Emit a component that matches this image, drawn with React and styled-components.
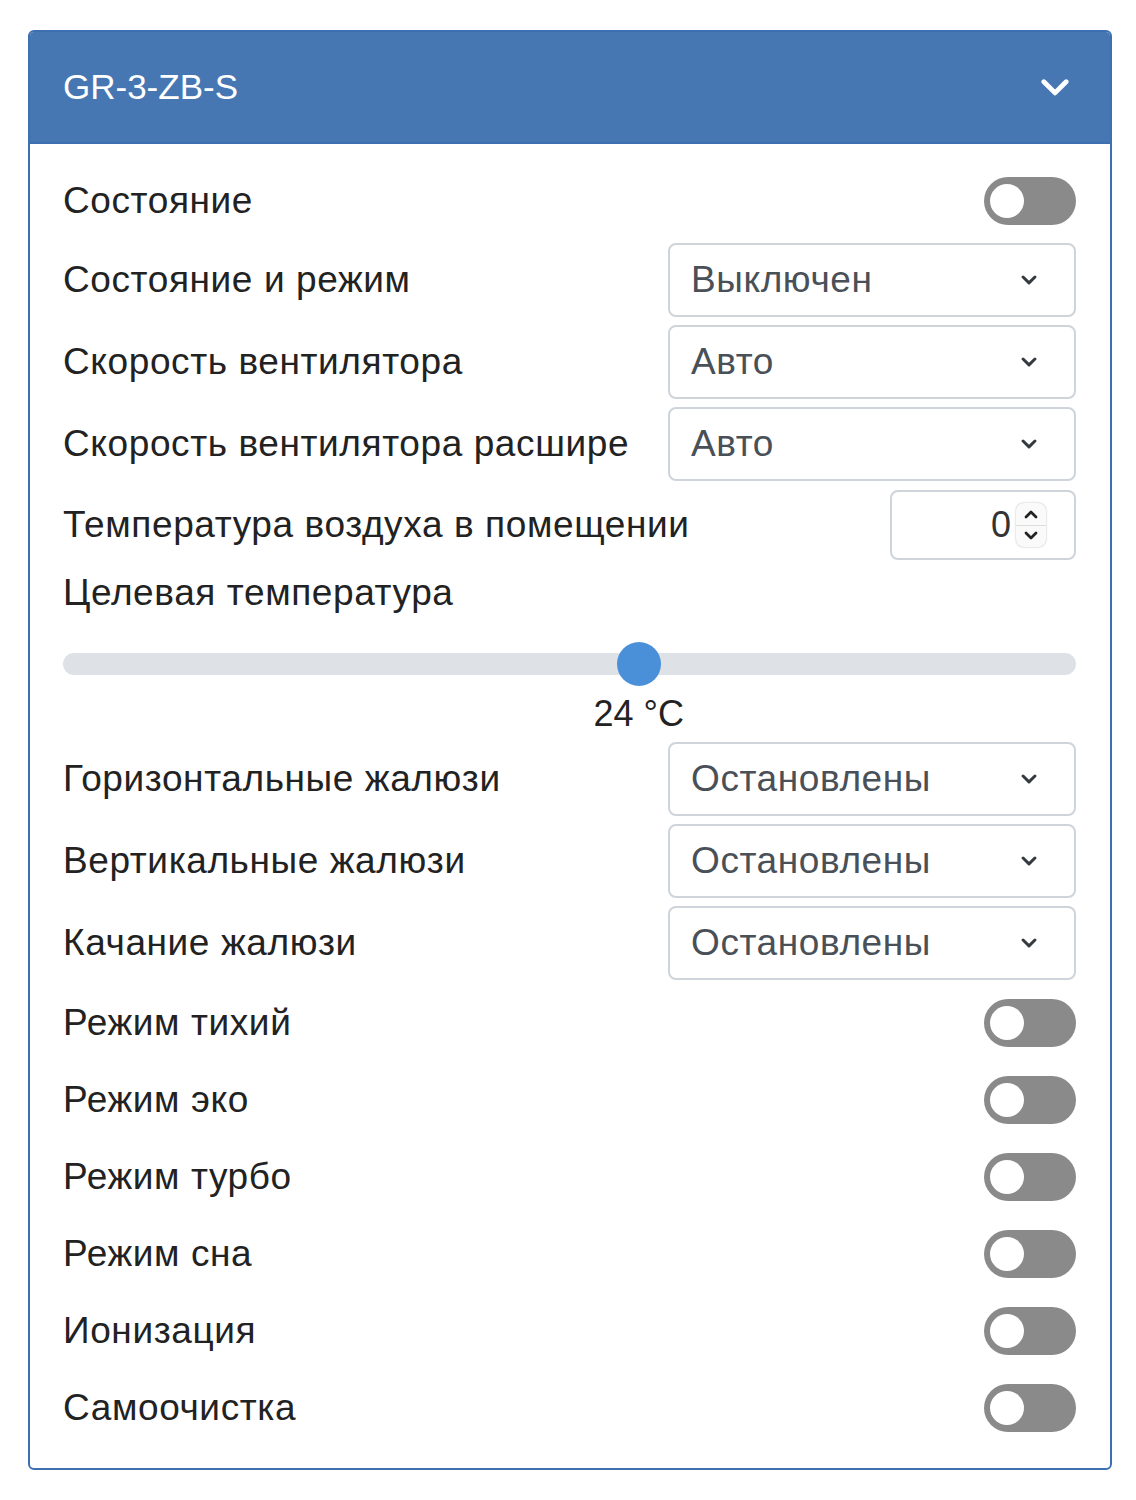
import React from 'react';
import styled, { createGlobalStyle } from 'styled-components';

const GlobalStyle = createGlobalStyle`
  html, body {
    margin: 0;
    padding: 0;
    background: #fff;
  }
  body {
    font-family: "Liberation Sans", Arial, sans-serif;
    color: #212529;
  }
`;

const Page = styled.div`
  padding: 30px 24px 30px 28px;
`;

const Card = styled.section`
  width: 1084px;
  box-sizing: border-box;
  border: 2px solid #3d70b0;
  border-radius: 6px;
  overflow: hidden;
`;

const Header = styled.header`
  height: 110px;
  background: #4677b3;
  display: flex;
  align-items: center;
  justify-content: space-between;
  padding: 0 40px 0 33px;
  color: #fff;
  font-size: 35px;
  border-bottom: 2px solid #3d70b0;
`;

const Body = styled.div`
  padding: 18px 34px 22px 33px;
  display: flex;
  flex-direction: column;
`;

const Row = styled.div`
  display: flex;
  align-items: center;
  justify-content: space-between;
  height: ${p => p.$h}px;
`;

const Label = styled.span`
  font-size: 37px;
  letter-spacing: 0.6px;
  color: #222;
  white-space: nowrap;
`;

const Toggle = styled.span`
  width: 92px;
  height: 48px;
  border-radius: 24px;
  background: #8a8a8a;
  display: flex;
  align-items: center;
  padding: 0 6px;
  box-sizing: border-box;
  &::before {
    content: '';
    width: 34px;
    height: 34px;
    border-radius: 50%;
    background: #fff;
  }
`;

const Select = styled.div`
  width: 408px;
  height: 74px;
  box-sizing: border-box;
  border: 2px solid #ced4da;
  border-radius: 8px;
  display: flex;
  align-items: center;
  justify-content: space-between;
  padding: 0 37px 0 21px;
  font-size: 37px;
  letter-spacing: 0.6px;
  color: #495057;
`;

const NumberBox = styled.div`
  width: 186px;
  height: 70px;
  box-sizing: border-box;
  border: 2px solid #ced4da;
  border-radius: 8px;
  display: flex;
  align-items: center;
  justify-content: flex-end;
  gap: 5px;
  padding-right: 28px;
  font-size: 36px;
  color: #333;
`;

const Spinner = styled.span`
  width: 30px;
  height: 44px;
  border-radius: 8px;
  box-shadow: 0 0 2px rgba(0, 0, 0, 0.3);
  display: flex;
  flex-direction: column;
  background: #fafafa;
  overflow: hidden;
`;

const SpinHalf = styled.span`
  flex: 1;
  display: flex;
  align-items: center;
  justify-content: center;
  & + & {
    border-top: 1px solid #ddd;
  }
`;

const SliderWrap = styled.div`
  padding-top: 32px;
`;

const Track = styled.div`
  position: relative;
  height: 22px;
  border-radius: 11px;
  background: #dee2e6;
`;

const Thumb = styled.span`
  position: absolute;
  top: -11px;
  width: 44px;
  height: 44px;
  margin-left: -22px;
  border-radius: 50%;
  background: #4a90d9;
`;

const ValueRow = styled.div`
  height: 48px;
  margin-top: 15px;
  font-size: 36px;
  color: #222;
  line-height: 48px;
`;

const ValueText = styled.span`
  display: inline-block;
  transform: translateX(-50%);
  white-space: nowrap;
`;

const Chevron = ({ size = 16, color = '#343a40', width = 3 }) => (
  <svg width={size} height={size * 0.62} viewBox="0 0 16 10" fill="none">
    <path d="M2 2l6 6 6-6" stroke={color} strokeWidth={width} strokeLinecap="round" strokeLinejoin="round" />
  </svg>
);

const SmallArrow = ({ up }) => (
  <svg width="16" height="10" viewBox="0 0 16 10" fill="none">
    <path d={up ? 'M3 8l5-5 5 5' : 'M3 2l5 5 5-5'} stroke="#222" strokeWidth="2.8" strokeLinecap="round" strokeLinejoin="round" />
  </svg>
);

const SwitchRow = ({ label }) => (
  <Row $h={77}>
    <Label>{label}</Label>
    <Toggle />
  </Row>
);

const SelectRow = ({ label, value }) => (
  <Row $h={82}>
    <Label>{label}</Label>
    <Select>
      <span>{value}</span>
      <Chevron />
    </Select>
  </Row>
);

const min = 16;
const max = 30;
const target = 24;

export default function App() {
  const pct = (target - min) / (max - min);
  const thumbPos = `calc(22px + (100% - 44px) * ${pct})`;
  return (
    <Page>
      <GlobalStyle />
      <Card>
        <Header>
          <span>GR-3-ZB-S</span>
          <Chevron size={30} color="#fff" width={2.6} />
        </Header>
        <Body>
          <SwitchRow label="Состояние" />
          <SelectRow label="Состояние и режим" value="Выключен" />
          <SelectRow label="Скорость вентилятора" value="Авто" />
          <SelectRow label="Скорость вентилятора расшире" value="Авто" />
          <Row $h={80}>
            <Label>Температура воздуха в помещении</Label>
            <NumberBox>
              <span>0</span>
              <Spinner>
                <SpinHalf><SmallArrow up /></SpinHalf>
                <SpinHalf><SmallArrow /></SpinHalf>
              </Spinner>
            </NumberBox>
          </Row>
          <Row $h={56}>
            <Label>Целевая температура</Label>
          </Row>
          <SliderWrap>
            <Track>
              <Thumb style={{ left: thumbPos }} />
            </Track>
            <ValueRow style={{ paddingLeft: thumbPos }}>
              <ValueText>{target} °C</ValueText>
            </ValueRow>
          </SliderWrap>
          <SelectRow label="Горизонтальные жалюзи" value="Остановлены" />
          <SelectRow label="Вертикальные жалюзи" value="Остановлены" />
          <SelectRow label="Качание жалюзи" value="Остановлены" />
          <SwitchRow label="Режим тихий" />
          <SwitchRow label="Режим эко" />
          <SwitchRow label="Режим турбо" />
          <SwitchRow label="Режим сна" />
          <SwitchRow label="Ионизация" />
          <SwitchRow label="Самоочистка" />
        </Body>
      </Card>
    </Page>
  );
}
